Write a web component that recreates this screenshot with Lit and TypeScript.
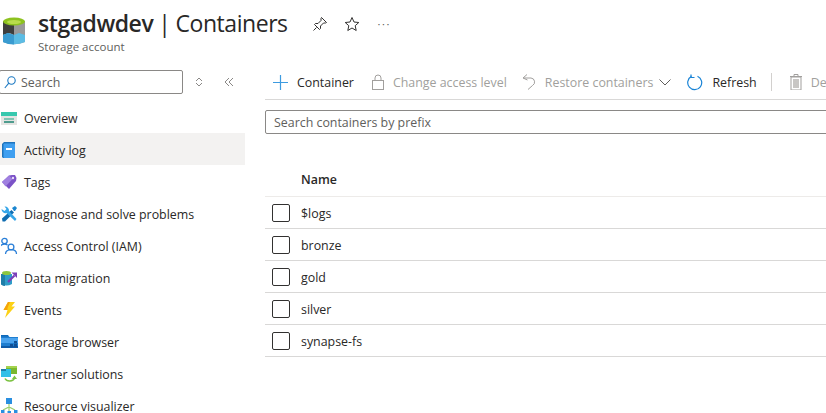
import { LitElement, css, html, svg } from "lit";
import { customElement } from "lit/decorators.js";

const icons: Record<string, unknown> = {
  overview: svg`<rect x="0" y="3" width="16" height="13" fill="#e4e4e2"/><rect x="0" y="3" width="16" height="4" fill="#37c8ae"/><rect x="3" y="9" width="10" height="2" fill="#7fc4b4"/><rect x="3" y="12" width="10" height="2" fill="#4f9c8e"/>`,
  activity: svg`<path d="M1 3 3 1h11v16H2l-1-1z" fill="#1f74bd"/><rect x="2.500" y="2.500" width="11.500" height="14.500" rx="1" fill="#3f9ff0"/><rect x="5" y="7" width="6" height="2" fill="#fff"/>`,
  tags: svg`<path d="M1 9 8 2.500 11 2h3l1.500 3-.5 3-7 8z" fill="#7b52c7"/><path d="M1 9 8 2.500l3.500 3.500-7 7.500z" fill="#a080e0"/><circle cx="12" cy="5" r="1.200" fill="#e6dcf7"/>`,
  diagnose: svg`<path d="M1 13.500 10.500 5l2.500 2.500L4 16.500H1.500z" fill="#0f6cb0"/><path d="M15.500 14 14 16 5.500 8A4 4 0 0 1 .5 4l3 2 2-2-2-2.500a4 4 0 0 1 4.500 4.500z" fill="#35a5e8"/><path d="M11 3l3-2 2 2-2 3h-1z" fill="#1a86d0"/>`,
  access: svg`<g fill="none" stroke="#2a7fd8" stroke-width="1.300"><circle cx="3.500" cy="4" r="2.700"/><path d="M-1 11c0-2.500 2-4 4.500-4 1.200 0 2.200.3 3 .9"/><circle cx="10" cy="10" r="2.900"/><path d="M4.500 17c0-2.800 2.300-4.300 5.500-4.300s5.500 1.500 5.500 4.300"/></g>`,
  migration: svg`<path d="M0 5h11v10q-5.500 3-11 0z" fill="#2f9cc8"/><path d="M0 5h4v12q-2 0-4-1.500z" fill="#1f7da8"/><ellipse cx="5.500" cy="4" rx="4.500" ry="2" fill="#8cc63f"/><path d="M7 13 13.500 6.500" stroke="#7a3fb8" stroke-width="2.200"/><path d="M10.500 3.500H16V9z" fill="#7a3fb8"/>`,
  events: svg`<path d="M7 1h7l-3.500 4.500H14L4 17l2.500-8H2.500z" fill="#fcd116"/><path d="M6.500 9H2.500L7 1h2L6.500 7z" fill="#f5a30a"/>`,
  storage: svg`<path d="M0 2h7l1.500 2H17v11H0z" fill="#1f7ed0"/><rect x="0" y="5" width="17" height="5" fill="#4aa3ee"/><rect x="0" y="2" width="7" height="1.500" fill="#0f68b8"/><rect x="0" y="13" width="17" height="2" fill="#0f5ba8"/><rect x="13" y="8" width="3" height="2.500" fill="#0f4f95"/><rect x="9" y="11" width="3" height="3" fill="#0f4f95"/><rect x="13" y="11" width="3" height="3" fill="#0f4f95"/>`,
  partner: svg`<rect x="5" y="1" width="11" height="8" fill="#7ab82e"/><rect x="5" y="1" width="11" height="2" fill="#a5d34f"/><rect x="0" y="4" width="10" height="8" fill="#32c0e8"/><rect x="0" y="4" width="5" height="2" fill="#1f7da8"/><path d="M4 13.500a5 4 0 0 0 9.500-.5" fill="none" stroke="#7cc242" stroke-width="1.500"/><path d="M11 14l2.500-3.500 2.500 3.500z" fill="#7cc242"/>`,
  visualizer: svg`<rect x="5" y="1" width="6" height="6" fill="#2a8fe0"/><path d="M8 7v5M2 13l6-3 6 3M8 12v2" fill="none" stroke="#9ccf6e" stroke-width="1.200"/><rect x="0" y="13" width="3.500" height="4" fill="#2a8fe0"/><rect x="6.500" y="14" width="3.500" height="3" fill="#2a8fe0"/><rect x="13" y="13" width="3.500" height="4" fill="#2a8fe0"/>`,
};

const menu = [
  ["overview", "Overview"],
  ["activity", "Activity log"],
  ["tags", "Tags"],
  ["diagnose", "Diagnose and solve problems"],
  ["access", "Access Control (IAM)"],
  ["migration", "Data migration"],
  ["events", "Events"],
  ["storage", "Storage browser"],
  ["partner", "Partner solutions"],
  ["visualizer", "Resource visualizer"],
];

const containers = ["$logs", "bronze", "gold", "silver", "synapse-fs"];

@customElement("app-root")
export class AppRoot extends LitElement {
  static styles = css`
    :host {
      display: block;
      width: 826px;
      height: 413px;
      overflow: hidden;
      background: #fff;
      color: #292827;
      font-family: "Open Sans", "Noto Sans", sans-serif;
      font-size: 12.4px;
    }
    svg {
      display: block;
      flex: none;
    }
    .header {
      display: flex;
      height: 70px;
      box-sizing: border-box;
      padding: 17px 0 0 2px;
    }
    .logo {
      margin-right: 12px;
    }
    .title-row {
      display: flex;
      align-items: center;
      height: 23px;
      margin-top: -5px;
    }
    .title {
      font-size: 23px;
      line-height: 23px;
      letter-spacing: -0.45px;
      word-spacing: -0.5px;
      white-space: nowrap;
    }
    .title b {
      font-weight: 600;
    }
    .subtitle {
      font-size: 11.5px;
      line-height: 14px;
      margin-top: 5px;
      color: #605e5c;
    }
    .actions {
      display: flex;
      align-items: center;
      gap: 16px;
      margin-left: 24px;
    }
    .more {
      color: #605e5c;
      font-size: 11px;
      line-height: 14px;
      letter-spacing: 1.5px;
      margin-left: 2px;
    }
    .body {
      display: flex;
    }
    .sidebar {
      width: 245px;
      flex: none;
    }
    .filter {
      display: flex;
      align-items: center;
      height: 24px;
    }
    .filter-box {
      display: flex;
      align-items: center;
      gap: 5px;
      box-sizing: border-box;
      width: 184px;
      height: 24px;
      margin-left: -1px;
      padding-left: 4px;
      border: 1px solid #8a8886;
      border-radius: 2px;
      color: #605e5c;
    }
    .updown {
      margin-left: 12px;
    }
    .collapse {
      margin-left: 21px;
    }
    .menu {
      margin-top: 7px;
    }
    .item {
      display: flex;
      align-items: center;
      box-sizing: border-box;
      height: 32px;
      padding: 2px 0 0 1px;
      gap: 5px;
      white-space: nowrap;
    }
    .item.active {
      background: #f3f2f1;
    }
    .main {
      flex: 1;
      min-width: 0;
      overflow: hidden;
      padding-left: 20px;
    }
    .toolbar {
      display: flex;
      align-items: center;
      height: 24px;
      padding-bottom: 5px;
      margin-bottom: 10px;
      border-bottom: 1px solid #d9d8d7;
      white-space: nowrap;
      width: 700px;
    }
    .tool {
      display: flex;
      align-items: center;
      gap: 9px;
      flex: none;
    }
    .disabled {
      color: #a19f9d;
    }
    .chevron {
      margin-left: -3px;
    }
    .divider {
      width: 1px;
      height: 18px;
      background: #d2d0ce;
      flex: none;
    }
    .prefix {
      box-sizing: border-box;
      width: 700px;
      height: 24px;
      padding-left: 8px;
      line-height: 24px;
      border: 1px solid #8a8886;
      border-radius: 2px;
      color: #605e5c;
    }
    .table {
      margin-top: 30px;
      width: 700px;
    }
    .row {
      display: flex;
      align-items: center;
      box-sizing: border-box;
      height: 32px;
      padding-left: 7px;
      border-bottom: 1px solid #d9d8d7;
    }
    .row span:last-child {
      margin-top: 2px;
    }
    .row.head {
      height: 33px;
      font-weight: 600;
      padding-bottom: 2px;
      border-bottom-color: #edebe9;
    }
    .head span:last-child {
      margin-top: 0;
    }
    .check {
      box-sizing: border-box;
      width: 18px;
      height: 18px;
      border: 1px solid #323130;
      border-radius: 2px;
      margin-right: 11px;
      flex: none;
    }
    .head .check {
      border: 0;
    }
  `;

  render() {
    return html`
      <div class="header">
        <svg class="logo" width="24" height="30" viewBox="0 0 24 30">
          <path d="M1 4h22v21q-11 4.500-22 0z" fill="#9a9a9a" />
          <path d="M1 4h11v14l-4-2-7 2z" fill="#3e3e3e" />
          <path d="M1 18l5-2 6 2 5-2 6 2v7q-11 4.500-22 0z" fill="#5cbce4" />
          <path d="M1 18l5-2 6 2v9.500q-6 0-11-2.500z" fill="#3a9bd0" />
          <ellipse cx="12" cy="4.500" rx="11" ry="4" fill="#8dc21f" />
          <ellipse cx="12" cy="5" rx="7" ry="2" fill="#b9dc4c" />
        </svg>
        <div>
          <div class="title-row">
            <div class="title"><b>stgadwdev</b> | Containers</div>
            <div class="actions">
              <svg width="16" height="16" viewBox="0 0 16 16" fill="none" stroke="#323130">
                <path d="M9.500 1.500l5 5-1 .5-2 0-3 3 0 2.500-1 1-5-5 1-1 2.500 0 3-3 0-2z" />
                <path d="M4.500 11.500 1.500 14.500" />
              </svg>
              <svg width="16" height="16" viewBox="0 0 16 16" fill="none" stroke="#323130">
                <path d="M8 1.500l2 4.500 4.800.5-3.600 3.200 1 4.800L8 12l-4.200 2.500 1-4.800L1.200 6.500 6 6z" />
              </svg>
              <span class="more">···</span>
            </div>
          </div>
          <div class="subtitle">Storage account</div>
        </div>
      </div>
      <div class="body">
        <div class="sidebar">
          <div class="filter">
            <div class="filter-box">
              <svg width="12" height="13" viewBox="0 0 12 13" fill="none" stroke="#1a78c2" stroke-width="1.100">
                <circle cx="7.500" cy="4.500" r="3.700" /><path d="M4.800 7.200 .8 12" />
              </svg>
              Search
            </div>
            <svg class="updown" width="8" height="10" viewBox="0 0 8 10" fill="none" stroke="#8a8886">
              <path d="M1 4 4 1l3 3M1 6l3 3 3-3" />
            </svg>
            <svg class="collapse" width="10" height="10" viewBox="0 0 10 10" fill="none" stroke="#8a8886">
              <path d="M5 1 1 5l4 4M9 1 5 5l4 4" />
            </svg>
          </div>
          <div class="menu">
            ${menu.map(
              ([key, label]) => html`
                <div class="item ${key === "activity" ? "active" : ""}">
                  <svg width="18" height="18" viewBox="0 0 18 18">${icons[key]}</svg>
                  ${label}
                </div>
              `
            )}
          </div>
        </div>
        <div class="main">
          <div class="toolbar">
            <div class="tool" style="margin-left:8px">
              <svg width="15" height="15" viewBox="0 0 15 15" stroke="#3d9be0" stroke-width="1.200">
                <path d="M7.500 0v15M0 7.500h15" />
              </svg>
              Container
            </div>
            <div class="tool disabled" style="margin-left:18px">
              <svg width="12" height="16" viewBox="0 0 12 16" fill="none" stroke="#a19f9d">
                <rect x=".5" y="6.500" width="11" height="9" /><path d="M3 6.500V4a3 3 0 0 1 6 0v2.500" />
              </svg>
              Change access level
            </div>
            <div class="tool disabled" style="margin-left:15px">
              <svg width="14" height="16" viewBox="0 0 14 16" fill="none" stroke="#a19f9d">
                <path d="M5 .5 1 4l4.500 2M1.500 4h7.500a4 4 0 0 1 1.500 7.500L6 15.500" />
              </svg>
              Restore containers
              <svg class="chevron" width="12" height="7" viewBox="0 0 12 7" fill="none" stroke="#605e5c">
                <path d="M.5 .5 6 6l5.500-5.500" />
              </svg>
            </div>
            <div class="tool" style="margin-left:16px">
              <svg width="16" height="17" viewBox="0 0 16 17" fill="none" stroke="#1a84d6" stroke-width="1.200">
                <path d="M10.500 2.200a7 7 0 1 1-6 .2" /><path d="M4 .5v3h3.500" />
              </svg>
              Refresh
            </div>
            <div class="divider" style="margin-left:14px"></div>
            <div class="tool disabled" style="margin-left:18px">
              <svg width="12" height="16" viewBox="0 0 12 16">
                <path d="M1 3h10v13H1z" fill="none" stroke="#a19f9d" /><rect x="3" y="5" width="6" height="9" fill="#c8c6c4" />
                <path d="M0 2.500h12M4 2.500V.5h4v2" fill="none" stroke="#a19f9d" />
              </svg>
              Delete
            </div>
          </div>
          <div class="prefix">Search containers by prefix</div>
          <div class="table">
            <div class="row head"><span class="check"></span><span>Name</span></div>
            ${containers.map(
              (name) => html`<div class="row"><span class="check"></span><span>${name}</span></div>`
            )}
          </div>
        </div>
      </div>
    `;
  }
}
